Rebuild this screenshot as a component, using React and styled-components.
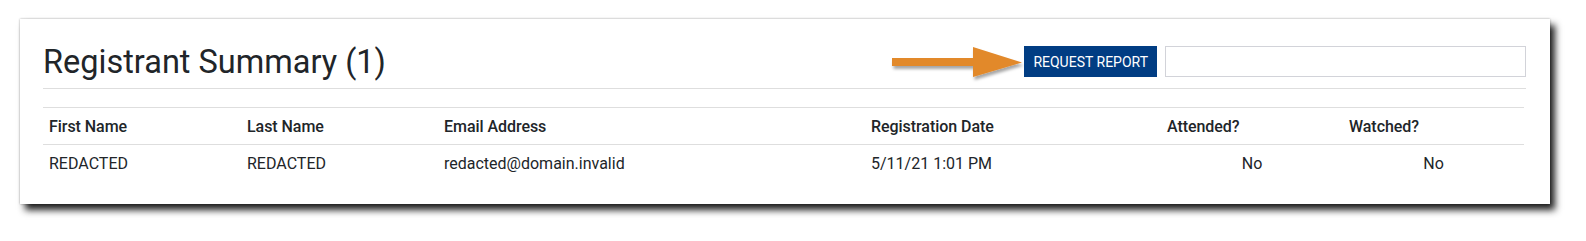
import React from "react";
import styled, { createGlobalStyle } from "styled-components";

const GlobalStyle = createGlobalStyle`
  html, body {
    margin: 0;
    padding: 0;
    background: #ffffff;
    font-family: Roboto, "Liberation Sans", Arial, sans-serif;
    color: #212529;
  }
  * { box-sizing: border-box; }
`;

const Page = styled.div`
  padding: 19px 36px 0 20px;
  width: 1586px;
  height: 241px;
  overflow: hidden;
`;

const Card = styled.section`
  background: #fff;
  width: 1530px;
  padding: 24px 24px 23px 23px;
  box-shadow: 5px 6px 7px rgba(0, 0, 0, 0.88), 0 0 2px rgba(0, 0, 0, 0.35);
`;

const HeaderRow = styled.header`
  display: flex;
  align-items: center;
  height: 46px;
  padding-bottom: 8px;
  border-bottom: 1px solid #dedede;
`;

const Title = styled.h1`
  margin: 0;
  font-size: 32.5px;
  line-height: 38px;
  font-weight: 400;
  color: #212529;
  letter-spacing: 0;
`;

const Actions = styled.div`
  margin-left: auto;
  display: flex;
  align-items: center;
`;

const ArrowSvg = styled.svg`
  display: block;
  margin-right: 1px;
  overflow: visible;
`;

const ReportButton = styled.button`
  height: 31px;
  padding: 0 9px;
  border: none;
  border-radius: 0;
  background: #013d83;
  color: #ffffff;
  font-family: Roboto, "Liberation Sans", Arial, sans-serif;
  font-size: 14px;
  font-weight: 400;
  text-transform: uppercase;
  letter-spacing: 0;
  cursor: pointer;
  margin-right: 8px;
`;

const SearchInput = styled.input`
  width: 361px;
  height: 31px;
  border: 1px solid #d2d3d9;
  border-radius: 0;
  background: #fff;
  padding: 0 8px;
  font-family: Roboto, "Liberation Sans", Arial, sans-serif;
  font-size: 14px;
  outline: none;
`;

const Table = styled.table`
  width: 1481px;
  margin-top: 18px;
  border-collapse: separate;
  border-spacing: 0;
  table-layout: fixed;
  font-size: 16px;
`;

const Th = styled.th`
  text-align: left;
  font-weight: 500;
  padding: 7px 6px 5px;
  line-height: 24px;
  color: #212529;
  border-top: 1px solid #dedede;
  border-bottom: 1px solid #dedede;
  letter-spacing: -0.05px;
  white-space: nowrap;
`;

const Td = styled.td`
  text-align: ${(p) => (p.$center ? "center" : "left")};
  font-weight: 400;
  padding: 7px 6px 5px;
  line-height: 24px;
  color: #212529;
  letter-spacing: 0;
  white-space: nowrap;
`;

const columns = [
  { label: "First Name", width: 198 },
  { label: "Last Name", width: 197 },
  { label: "Email Address", width: 427 },
  { label: "Registration Date", width: 296 },
  { label: "Attended?", width: 182 },
  { label: "Watched?", width: 181 },
];

const rows = [
  {
    first: "REDACTED",
    last: "REDACTED",
    email: "redacted@domain.invalid",
    date: "5/11/21 1:01 PM",
    attended: "No",
    watched: "No",
  },
];

function Arrow() {
  return (
    <ArrowSvg width="132" height="34" viewBox="0 0 132 34">
      <defs>
        <filter id="arrowShadow" x="-10%" y="-30%" width="130%" height="170%">
          <feDropShadow dx="1.5" dy="3" stdDeviation="1.6" floodColor="#000" floodOpacity="0.35" />
        </filter>
      </defs>
      <path
        d="M1 13 H82 V2 L131 17.5 L82 32 V21 H1 Z"
        fill="#e2892b"
        filter="url(#arrowShadow)"
      />
    </ArrowSvg>
  );
}

export default function App() {
  return (
    <Page>
      <GlobalStyle />
      <Card>
        <HeaderRow>
          <Title>Registrant Summary (1)</Title>
          <Actions>
            <Arrow />
            <ReportButton type="button">Request Report</ReportButton>
            <SearchInput type="text" aria-label="Search" />
          </Actions>
        </HeaderRow>
        <Table>
          <colgroup>
            {columns.map((c) => (
              <col key={c.label} style={{ width: c.width }} />
            ))}
          </colgroup>
          <thead>
            <tr>
              {columns.map((c) => (
                <Th key={c.label}>{c.label}</Th>
              ))}
            </tr>
          </thead>
          <tbody>
            {rows.map((r, i) => (
              <tr key={i}>
                <Td>{r.first}</Td>
                <Td>{r.last}</Td>
                <Td>{r.email}</Td>
                <Td>{r.date}</Td>
                <Td $center>{r.attended}</Td>
                <Td $center>{r.watched}</Td>
              </tr>
            ))}
          </tbody>
        </Table>
      </Card>
    </Page>
  );
}
